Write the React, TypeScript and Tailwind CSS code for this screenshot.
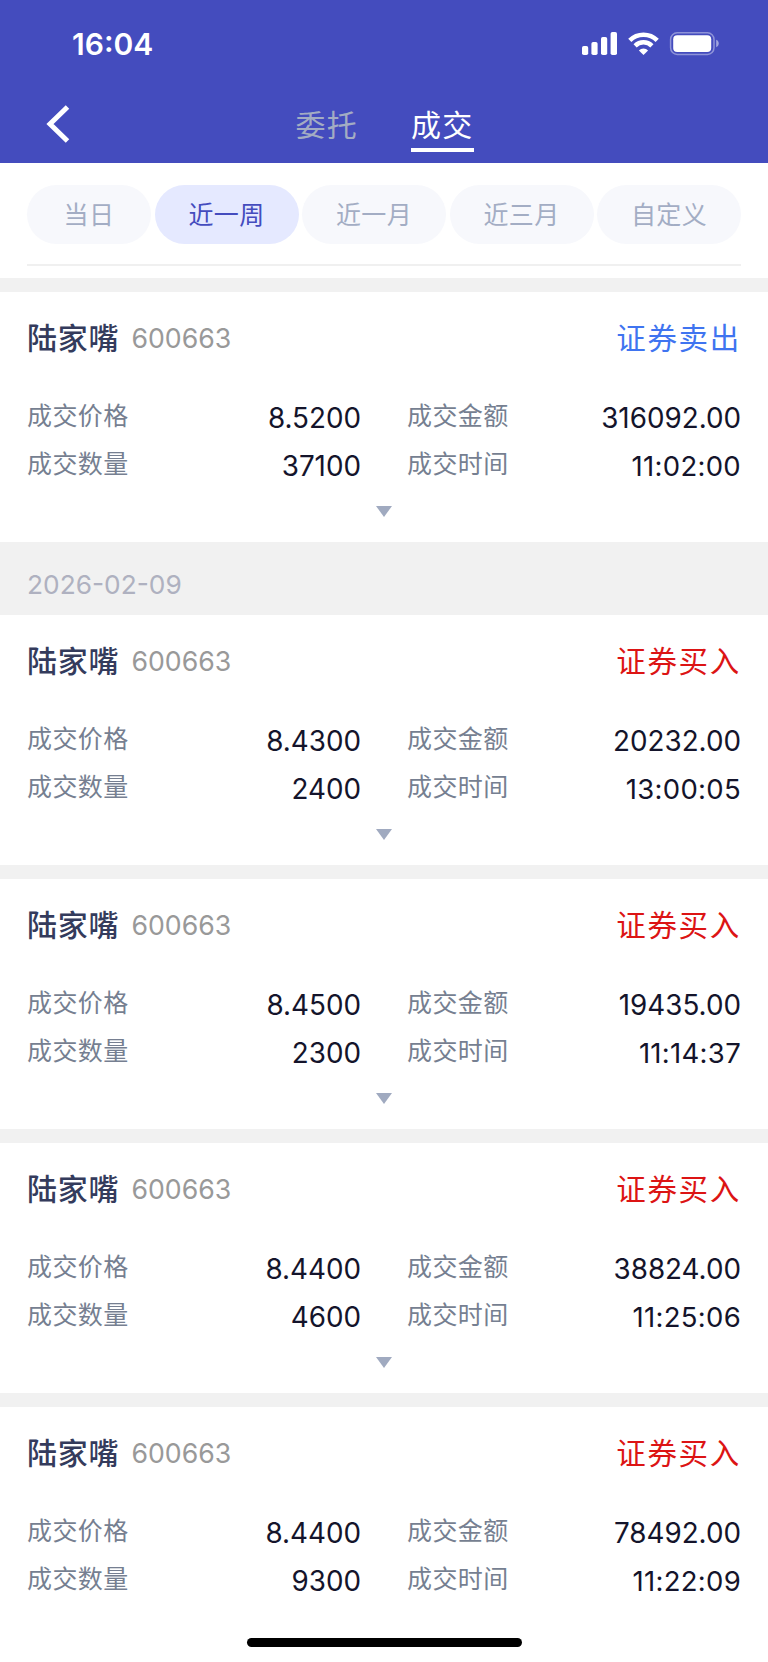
type Trade = {
  side: 'buy' | 'sell'
  price: string
  amount: string
  quantity: string
  time: string
}

type Group = {
  date?: string
  trades: Trade[]
}

const ranges = [
  { label: '当日', width: 'w-[124px]' },
  { label: '近一周', width: 'w-[144px]', active: true },
  { label: '近一月', width: 'w-[144px]' },
  { label: '近三月', width: 'w-[144px]' },
  { label: '自定义', width: 'w-[144px]' },
]

const groups: Group[] = [
  {
    trades: [{ side: 'sell', price: '8.5200', amount: '316092.00', quantity: '37100', time: '11:02:00' }],
  },
  {
    date: '2026-02-09',
    trades: [
      { side: 'buy', price: '8.4300', amount: '20232.00', quantity: '2400', time: '13:00:05' },
      { side: 'buy', price: '8.4500', amount: '19435.00', quantity: '2300', time: '11:14:37' },
      { side: 'buy', price: '8.4400', amount: '38824.00', quantity: '4600', time: '11:25:06' },
      { side: 'buy', price: '8.4400', amount: '78492.00', quantity: '9300', time: '11:22:09' },
    ],
  },
]

function StatusBar() {
  return (
    <div className="flex h-[87px] items-start justify-between pl-[72px] pr-12">
      <span className="mt-[24px] text-[30px] font-semibold leading-10">16:04</span>
      <svg className="mt-[32px] h-6 w-[138px]" viewBox="0 0 138 24" fill="white">
        <rect x="0" y="14" width="6.2" height="9" rx="1.8" />
        <rect x="9.4" y="10" width="6.2" height="13" rx="1.8" />
        <rect x="19" y="5" width="6.2" height="18" rx="1.8" />
        <rect x="28.6" y="0" width="6.4" height="23" rx="1.8" />
        <g fill="none" stroke="white" strokeWidth="4.5">
          <path d="M47.8 8.4a19.2 19.2 0 0 1 27.4 0" />
          <path d="M53.1 13.8a12 12 0 0 1 16.8 0" />
        </g>
        <path d="M61.5 23l-4.6-4.6a6.6 6.6 0 0 1 9.2 0z" />
        <rect x="88.6" y="0.8" width="43.4" height="21.6" rx="6.6" fill="none" stroke="white" strokeOpacity="0.4" strokeWidth="1.5" />
        <rect x="91.2" y="3.2" width="38" height="16.8" rx="4" />
        <path d="M134.2 7.8c3.4 1.2 3.4 6.2 0 7.4z" fillOpacity="0.5" />
      </svg>
    </div>
  )
}

function Header() {
  return (
    <header className="h-[163px] bg-[#444cbe] text-white">
      <StatusBar />
      <nav className="relative flex h-[76px] justify-center gap-[53px] pl-px text-[30px] tracking-[1.3px]">
        <svg className="absolute left-[46px] top-[17px] h-10 w-6" viewBox="0 0 24 40" fill="none" stroke="white" strokeWidth="5">
          <path d="M21.5 3L4 20l17.5 17" />
        </svg>
        <span className="h-[65px] pt-[16px] leading-[44px] text-[#a3acc3]">委托</span>
        <span className="h-[65px] border-b-4 border-white pt-[16px] leading-[44px]">成交</span>
      </nav>
    </header>
  )
}

function Field({ label, value }: { label: string; value: string }) {
  return (
    <div className="flex h-12 items-center justify-between">
      <span className="pb-[3px] text-[25px] tracking-[0.4px] text-[#767f91]">{label}</span>
      <span className={value.includes(':') ? 'pt-px text-[27.5px] tracking-[0.3px] text-[#14142b]' : 'pt-px text-[27.8px] text-[#14142b]'}>
        {value}
      </span>
    </div>
  )
}

function TradeCard({ trade }: { trade: Trade }) {
  const sell = trade.side === 'sell'
  return (
    <article className="h-[250px] bg-white px-[27px] pt-[24px]">
      <div className="flex h-11 items-center">
        <h2 className="text-[30px] font-medium tracking-[0.8px] text-[#343b5c]">陆家嘴</h2>
        <span className="ml-3 text-[26.7px] text-[#999999]">600663</span>
        <span className={sell ? 'ml-auto text-[29.5px] tracking-[1.7px] text-[#3f74f0]' : 'ml-auto text-[29.5px] tracking-[1.7px] text-[#dc1414]'}>
          {sell ? '证券卖出' : '证券买入'}
        </span>
      </div>
      <div className="mt-[34px] grid grid-cols-2 gap-x-[46px]">
        <Field label="成交价格" value={trade.price} />
        <Field label="成交金额" value={trade.amount} />
        <Field label="成交数量" value={trade.quantity} />
        <Field label="成交时间" value={trade.time} />
      </div>
      <svg className="mx-auto mt-4 h-[11px] w-4" viewBox="0 0 16 11" fill="#a0aac0">
        <path d="M0 0h16L8 11z" />
      </svg>
    </article>
  )
}

export default function App() {
  return (
    <div className="relative h-[1662px] overflow-hidden bg-[#f1f1f1] font-['Inter','Noto_Sans_CJK_SC',sans-serif]">
      <Header />
      <div className="h-[115px] bg-white px-[27px] pt-[22px]">
        <div className="flex justify-between">
          {ranges.map((range) => (
            <button
              key={range.label}
              className={`flex h-[59px] items-center justify-center rounded-full pt-[3px] text-[25px] tracking-[0.4px] ${range.width} ${
                range.active ? 'bg-[#e5e9ff] text-[#444cbe]' : 'bg-[#f7f8fc] text-[#a3adc4]'
              }`}
            >
              {range.label}
            </button>
          ))}
        </div>
        <div className="mt-5 h-[2px] bg-[#f0f0f0]" />
      </div>
      <main className="pt-[14px]">
        {groups.map((group, i) => (
          <section key={i}>
            {group.date && (
              <h3 className="flex h-[73px] items-center pl-[27px] pt-[13px] text-[26.3px] text-[#afb1c0]">{group.date}</h3>
            )}
            <div className="space-y-[14px]">
              {group.trades.map((trade) => (
                <TradeCard key={trade.time} trade={trade} />
              ))}
            </div>
          </section>
        ))}
      </main>
      {/* home indicator area */}
      <div className="absolute inset-x-0 bottom-0 flex h-[60px] justify-center bg-white pt-9">
        <div className="h-[9px] w-[275px] rounded-full bg-black" />
      </div>
    </div>
  )
}
